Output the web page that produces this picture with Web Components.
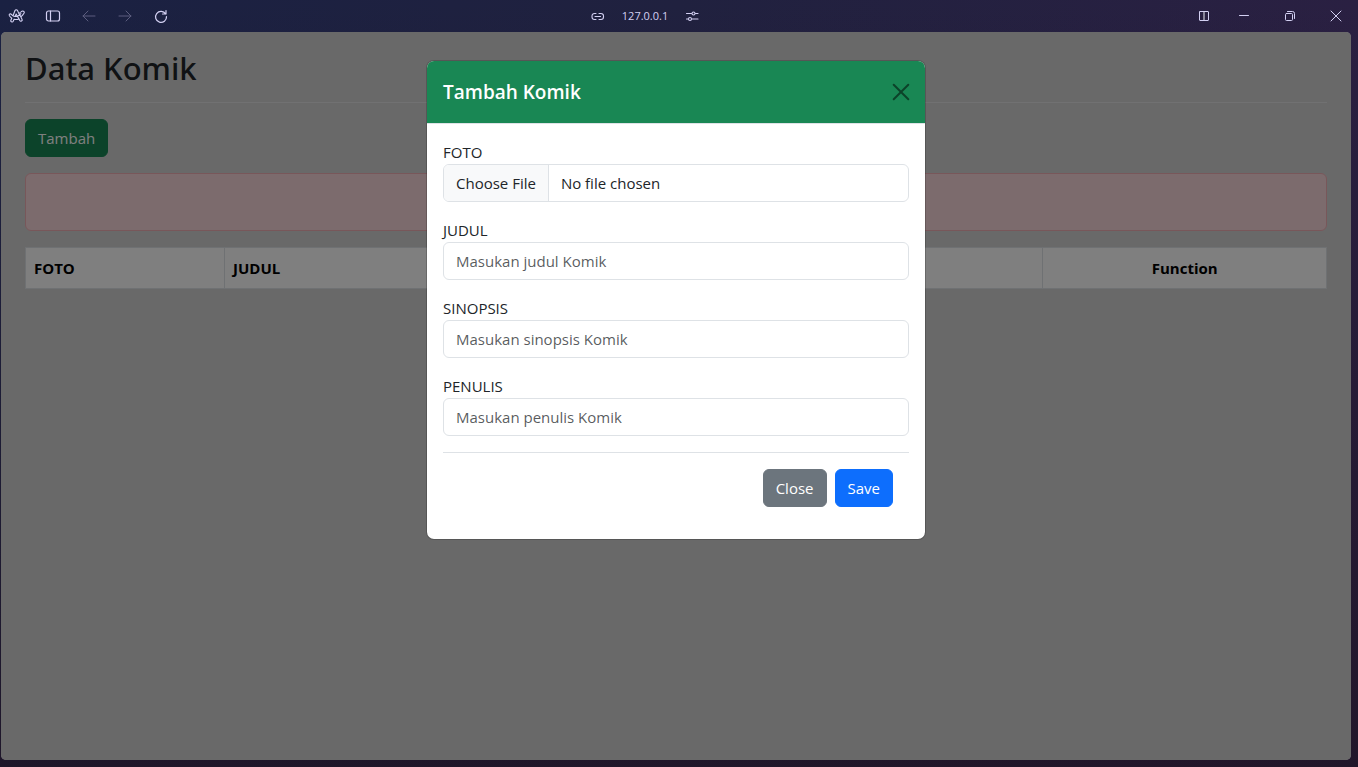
<!DOCTYPE html>
<html lang="id">
<head>
<meta charset="utf-8">
<title>Data Komik</title>
<style>
  html, body { height: 100%; margin: 0; }
  body { font-family: "Open Sans", "Noto Sans", sans-serif; font-size: 15px; line-height: 24px; color: #212529; }
</style>
</head>
<body>
<browser-window>
  <browser-toolbar slot="toolbar" address="127.0.0.1"></browser-toolbar>
  <komik-page></komik-page>
  <komik-modal slot="overlay" heading="Tambah Komik">
    <form-field label="FOTO" type="file"></form-field>
    <form-field label="JUDUL" hint="Masukan judul Komik"></form-field>
    <form-field label="SINOPSIS" hint="Masukan sinopsis Komik"></form-field>
    <form-field label="PENULIS" hint="Masukan penulis Komik"></form-field>
    <action-button slot="actions" tone="secondary">Close</action-button>
    <action-button slot="actions" tone="primary">Save</action-button>
  </komik-modal>
</browser-window>

<script>
class BaseElement extends HTMLElement {
  render(html) {
    const t = document.createElement('template');
    t.innerHTML = '<style>*{box-sizing:border-box}</style>' + html;
    this.attachShadow({ mode: 'open' }).append(t.content.cloneNode(true));
  }
}

customElements.define('browser-window', class extends BaseElement {
  connectedCallback() {
    this.render(`
      <style>
        :host { display: flex; flex-direction: column; min-height: 100vh; box-sizing: border-box; padding: 0 7px 7px 1px;
          background: linear-gradient(180deg, transparent, rgba(32,20,36,.8)), linear-gradient(90deg, #1a2142, #20213f 50%, #2a2042); }
        .bar { margin: 0 -7px 0 -1px; }
        main { flex: 1; position: relative; display: flex; flex-direction: column; background: #d3d3d3; border-radius: 5px; overflow: hidden; }
      </style>
      <div class="bar"><slot name="toolbar"></slot></div>
      <main><slot></slot><slot name="overlay"></slot></main>`);
  }
});

customElements.define('browser-toolbar', class extends BaseElement {
  connectedCallback() {
    this.render(`
      <style>
        :host { display: grid; grid-template-columns: 1fr auto 1fr; align-items: center; height: 32px; color: #d3d0f2; }
        div { display: flex; align-items: center; }
        .nav { gap: 8px; padding-left: 3px; }
        .address { gap: 8px; padding-right: 68px; font-size: 11px; line-height: 16px; }
        .window { gap: 2px; justify-content: flex-end; }
        button { display: grid; place-items: center; width: 28px; height: 32px; padding: 0; border: 0; background: none; color: inherit; }
        .address button { width: 16px; }
        .address span { padding: 0 8px; }
        .window button { width: 44px; }
        .window button:first-child { width: 32px; }
        button:disabled { color: #5c5d7e; }
        svg { display: block; fill: none; stroke: currentColor; stroke-linecap: round; stroke-linejoin: round; }
      </style>
      <div class="nav">
        <button aria-label="Menu"><svg width="18" height="16" viewBox="0 0 18 16" stroke="#e2e1ea" stroke-width="1.1"><path d="M7 2.5c.5-1 2-1 2.5 0l1.300 2.900C11.800 4.600 12.900 4 14 3.300c1.300-.8 3 .6 2 2-.9 1.400-2 2.600-3.100 3.600l1.200 2.500c.6 1.500-1.500 2.600-2.300 1.100l-.8-1.600c-1.700.7-3.300.8-4.900.4l-.9 1.900c-.8 1.500-3 .5-2.300-1l.9-2C2.800 9.400 2 8.600 1.400 7.700c-.8-1.400 1-2.500 2-1.300.5.6 1 1 1.600 1.400L7 2.500zM8.200 6 7 8.500c.8.100 1.600 0 2.300-.2L8.200 6zM5 7.800c.6.400 1.300.6 2 .7M9.300 8.300l1.700 2.600M9.300 8.300c1.400-.6 2.600-1.500 3.600-2.700M10.800 5.400l2.100 3.500"/></svg></button>
        <button aria-label="Sidebar"><svg width="16" height="16" viewBox="0 0 16 16" stroke-width="1.2"><rect x="1.5" y="3" width="13" height="10" rx="2"/><path d="M5.5 3v10"/></svg></button>
        <button aria-label="Back" disabled><svg width="16" height="16" viewBox="0 0 16 16"><path d="M14 8H2M7 3 2 8l5 5"/></svg></button>
        <button aria-label="Forward" disabled><svg width="16" height="16" viewBox="0 0 16 16"><path d="M2 8h12M9 3l5 5-5 5"/></svg></button>
        <button aria-label="Reload"><svg width="16" height="16" viewBox="0 0 16 16" stroke-width="1.2"><path d="M13.5 8.5A5.5 5.5 0 1 1 12.7 6M13 2.5V6H9.5"/></svg></button>
      </div>
      <div class="address">
        <button aria-label="Copy link"><svg width="14" height="16" viewBox="0 0 14 16" stroke-width="1.1"><path d="M5 11.500H3.500a2.500 2.500 0 0 1-2.500-2.500V8a2.500 2.500 0 0 1 2.500-2.500H5M8 5.500h1.500A2.500 2.500 0 0 1 12.500 8v1a2.500 2.500 0 0 1-2.500 2.500H8M4 8.500h5.500"/></svg></button>
        <span>${this.getAttribute('address')}</span>
        <button aria-label="Site settings"><svg width="14" height="16" viewBox="0 0 14 16" stroke-width="1.1"><path d="M1.500 5.500h5M10.500 5.500h2.500M1.500 11h1.500M7 11h6"/><circle cx="8.500" cy="5.500" r="1.500"/><circle cx="5" cy="11" r="1.500"/></svg></button>
      </div>
      <div class="window">
        <button aria-label="Split view"><svg width="12" height="12" viewBox="0 0 12 12" stroke="#fff" stroke-width="1"><rect x="1.500" y="1.500" width="9" height="9" rx=".5"/><path d="M6 2v8" stroke="#aaa8b8" stroke-width="1.500" stroke-linecap="butt"/></svg></button>
        <button aria-label="Minimize"><svg width="12" height="12" viewBox="0 0 12 12"><path d="M1.500 5.500h9"/></svg></button>
        <button aria-label="Restore"><svg width="12" height="12" viewBox="0 0 12 12"><rect x="1.500" y="3.500" width="7" height="7" rx="1"/><path d="M3.500 1.500h5a2 2 0 0 1 2 2v5"/></svg></button>
        <button aria-label="Close window"><svg width="12" height="12" viewBox="0 0 12 12"><path d="m1 1 10 10M11 1 1 11"/></svg></button>
      </div>`);
  }
});

customElements.define('action-button', class extends BaseElement {
  connectedCallback() {
    this.render(`
      <style>
        :host { display: inline-block; --tone: #198754; }
        :host([tone=secondary]) { --tone: #6c757d; }
        :host([tone=primary]) { --tone: #0d6efd; }
        button { display: block; font: inherit; color: #fff; background: var(--tone); border: 1px solid var(--tone); border-radius: 6px; padding: 6px 12px; }
      </style>
      <button type="button"><slot></slot></button>`);
  }
});

customElements.define('komik-page', class extends BaseElement {
  connectedCallback() {
    this.render(`
      <style>
        :host { display: flex; flex-direction: column; gap: 16px; padding: 16px 24px; }
        h1 { margin: 0; height: 38px; font-family: "Noto Sans", "Open Sans", sans-serif; font-size: 31px; line-height: 40px; font-weight: 500; }
        hr { width: 100%; margin: 0; border: 0; border-top: 1px solid #e2e3e4; }
        action-button { align-self: flex-start; }
        .alert { height: 58px; background: #f8d7da; border: 1px solid #f1aeb5; border-radius: 6px; }
        table { width: 100%; table-layout: fixed; border-collapse: collapse; background: #fff; color: #000; }
        th { padding: 8px; border: 1px solid #dee2e6; text-align: left; font-weight: 700; }
        th:last-child { text-align: center; }
        .narrow { width: 15.3%; }
        .wide { width: 21.8%; }
      </style>
      <h1>Data Komik</h1>
      <hr>
      <action-button>Tambah</action-button>
      <div class="alert" role="alert"></div>
      <table>
        <colgroup><col class="narrow"><col><col class="wide"></colgroup>
        <thead><tr><th>FOTO</th><th>JUDUL</th><th>Function</th></tr></thead>
      </table>`);
  }
});

customElements.define('form-field', class extends BaseElement {
  connectedCallback() {
    const file = this.getAttribute('type') === 'file';
    this.render(`
      <style>
        :host { display: block; }
        label { display: block; }
        input { display: block; width: 100%; height: 38px; padding: 6px 12px; font: inherit; color: #212529; background: #fff; border: 1px solid #dee2e6; border-radius: 6px; overflow: hidden; }
        input::placeholder { color: #212529bf; opacity: 1; }
        input::file-selector-button { font: inherit; color: inherit; padding: 6px 12px; margin: -6px 12px -6px -12px; background: #f8f9fa; border: 0 solid #dee2e6; border-right-width: 1px; border-radius: 0; }
      </style>
      <label for="field">${this.getAttribute('label')}</label>
      <input id="field" type="${file ? 'file' : 'text'}" ${file ? '' : `placeholder="${this.getAttribute('hint')}"`}>`);
  }
});

customElements.define('komik-modal', class extends BaseElement {
  connectedCallback() {
    this.render(`
      <style>
        :host { position: absolute; inset: 0; display: flex; justify-content: center; align-items: flex-start; padding: 28px; box-sizing: border-box; background: rgba(0,0,0,.5); }
        section { width: 100%; max-width: 500px; background: #fff; background-clip: padding-box; border: 1px solid rgba(0,0,0,.175); border-radius: 8px; }
        header { display: flex; align-items: center; justify-content: space-between; padding: 16px; background: #198754; color: #fff; border-bottom: 1px solid #dee2e6; border-radius: 7px 7px 0 0; }
        h2 { margin: 0; font-size: 19px; line-height: 30px; font-weight: 600; }
        header button { padding: 0; border: 0; background: none; color: #000; opacity: .5; }
        svg { display: block; }
        form { display: flex; flex-direction: column; gap: 16px; padding: 16px; }
        footer { display: flex; justify-content: flex-end; gap: 8px; padding: 16px; border-top: 1px solid #dee2e6; }
      </style>
      <section role="dialog" aria-labelledby="title">
        <header>
          <h2 id="title">${this.getAttribute('heading')}</h2>
          <button type="button" aria-label="Close"><svg width="16" height="16" viewBox="0 0 16 16" overflow="visible" fill="none" stroke="currentColor" stroke-width="2" stroke-linecap="round"><path d="m.7.7 14.600 14.600M15.300.7.7 15.300"/></svg></button>
        </header>
        <form>
          <slot></slot>
          <footer><slot name="actions"></slot></footer>
        </form>
      </section>`);
  }
});
</script>
</body>
</html>
